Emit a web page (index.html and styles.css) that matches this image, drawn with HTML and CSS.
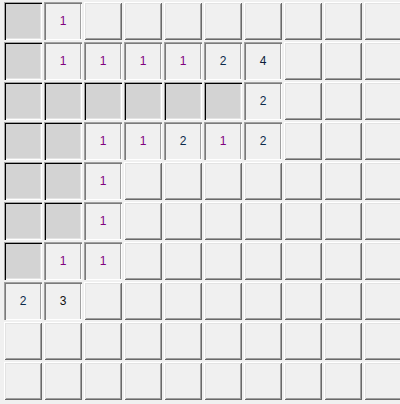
FILE: index.html
```html
<!DOCTYPE html>
<html>
<head>
<meta charset="utf-8">
<link rel="stylesheet" href="styles.css">
</head>
<body>
<div class="board">
  <div class="cell open"></div><div class="cell num n1">1</div><div class="cell"></div><div class="cell"></div><div class="cell"></div><div class="cell"></div><div class="cell"></div><div class="cell"></div><div class="cell"></div><div class="cell"></div>
  <div class="cell open"></div><div class="cell num n1">1</div><div class="cell num n1">1</div><div class="cell num n1">1</div><div class="cell num n1">1</div><div class="cell num n2">2</div><div class="cell num n4">4</div><div class="cell"></div><div class="cell"></div><div class="cell"></div>
  <div class="cell open"></div><div class="cell open"></div><div class="cell open"></div><div class="cell open"></div><div class="cell open"></div><div class="cell open"></div><div class="cell num n2">2</div><div class="cell"></div><div class="cell"></div><div class="cell"></div>
  <div class="cell open"></div><div class="cell open"></div><div class="cell num n1">1</div><div class="cell num n1">1</div><div class="cell num n2">2</div><div class="cell num n1">1</div><div class="cell num n2">2</div><div class="cell"></div><div class="cell"></div><div class="cell"></div>
  <div class="cell open"></div><div class="cell open"></div><div class="cell num n1">1</div><div class="cell"></div><div class="cell"></div><div class="cell"></div><div class="cell"></div><div class="cell"></div><div class="cell"></div><div class="cell"></div>
  <div class="cell open"></div><div class="cell open"></div><div class="cell num n1">1</div><div class="cell"></div><div class="cell"></div><div class="cell"></div><div class="cell"></div><div class="cell"></div><div class="cell"></div><div class="cell"></div>
  <div class="cell open"></div><div class="cell num n1">1</div><div class="cell num n1">1</div><div class="cell"></div><div class="cell"></div><div class="cell"></div><div class="cell"></div><div class="cell"></div><div class="cell"></div><div class="cell"></div>
  <div class="cell num n2">2</div><div class="cell num n3">3</div><div class="cell"></div><div class="cell"></div><div class="cell"></div><div class="cell"></div><div class="cell"></div><div class="cell"></div><div class="cell"></div><div class="cell"></div>
  <div class="cell"></div><div class="cell"></div><div class="cell"></div><div class="cell"></div><div class="cell"></div><div class="cell"></div><div class="cell"></div><div class="cell"></div><div class="cell"></div><div class="cell"></div>
  <div class="cell"></div><div class="cell"></div><div class="cell"></div><div class="cell"></div><div class="cell"></div><div class="cell"></div><div class="cell"></div><div class="cell"></div><div class="cell"></div><div class="cell"></div>
</div>
</body>
</html>
```

FILE: styles.css
```css
html, body {
  margin: 0;
  padding: 0;
  background: #f0f0f0;
  overflow: hidden;
  width: 400px;
  height: 404px;
}

.board {
  display: grid;
  grid-template-columns: repeat(10, 38px);
  grid-auto-rows: 38px;
  gap: 2px;
  padding: 2px 0 0 4px;
  width: 402px;
}

.cell {
  background: #f0f0f0;
  box-shadow:
    inset 1px 1px 0 #ffffff,
    inset -1px -1px 0 #696969,
    inset 2px 2px 0 #e3e3e3,
    inset -2px -2px 0 #a0a0a0;
  font-family: "Liberation Sans", Arial, sans-serif;
  font-size: 12px;
  display: flex;
  align-items: center;
  justify-content: center;
}

.open {
  background: #d3d3d3;
  box-shadow:
    inset 1px 1px 0 #a0a0a0,
    inset 2px 2px 0 #000000,
    inset -1px -1px 0 #ffffff,
    inset -2px -2px 0 #e3e3e3;
}

.num {
  background: #f0f0f0;
  box-shadow:
    inset 1px 1px 0 #a0a0a0,
    inset 2px 2px 0 #7a7a7a,
    inset -1px -1px 0 #ffffff,
    inset -2px 0 0 #a0a0a0;
}

.n1 { color: #800080; }
.n2 { color: #0c2a4a; }
.n3 { color: #111111; }
.n4 { color: #0c1c3a; }
```
